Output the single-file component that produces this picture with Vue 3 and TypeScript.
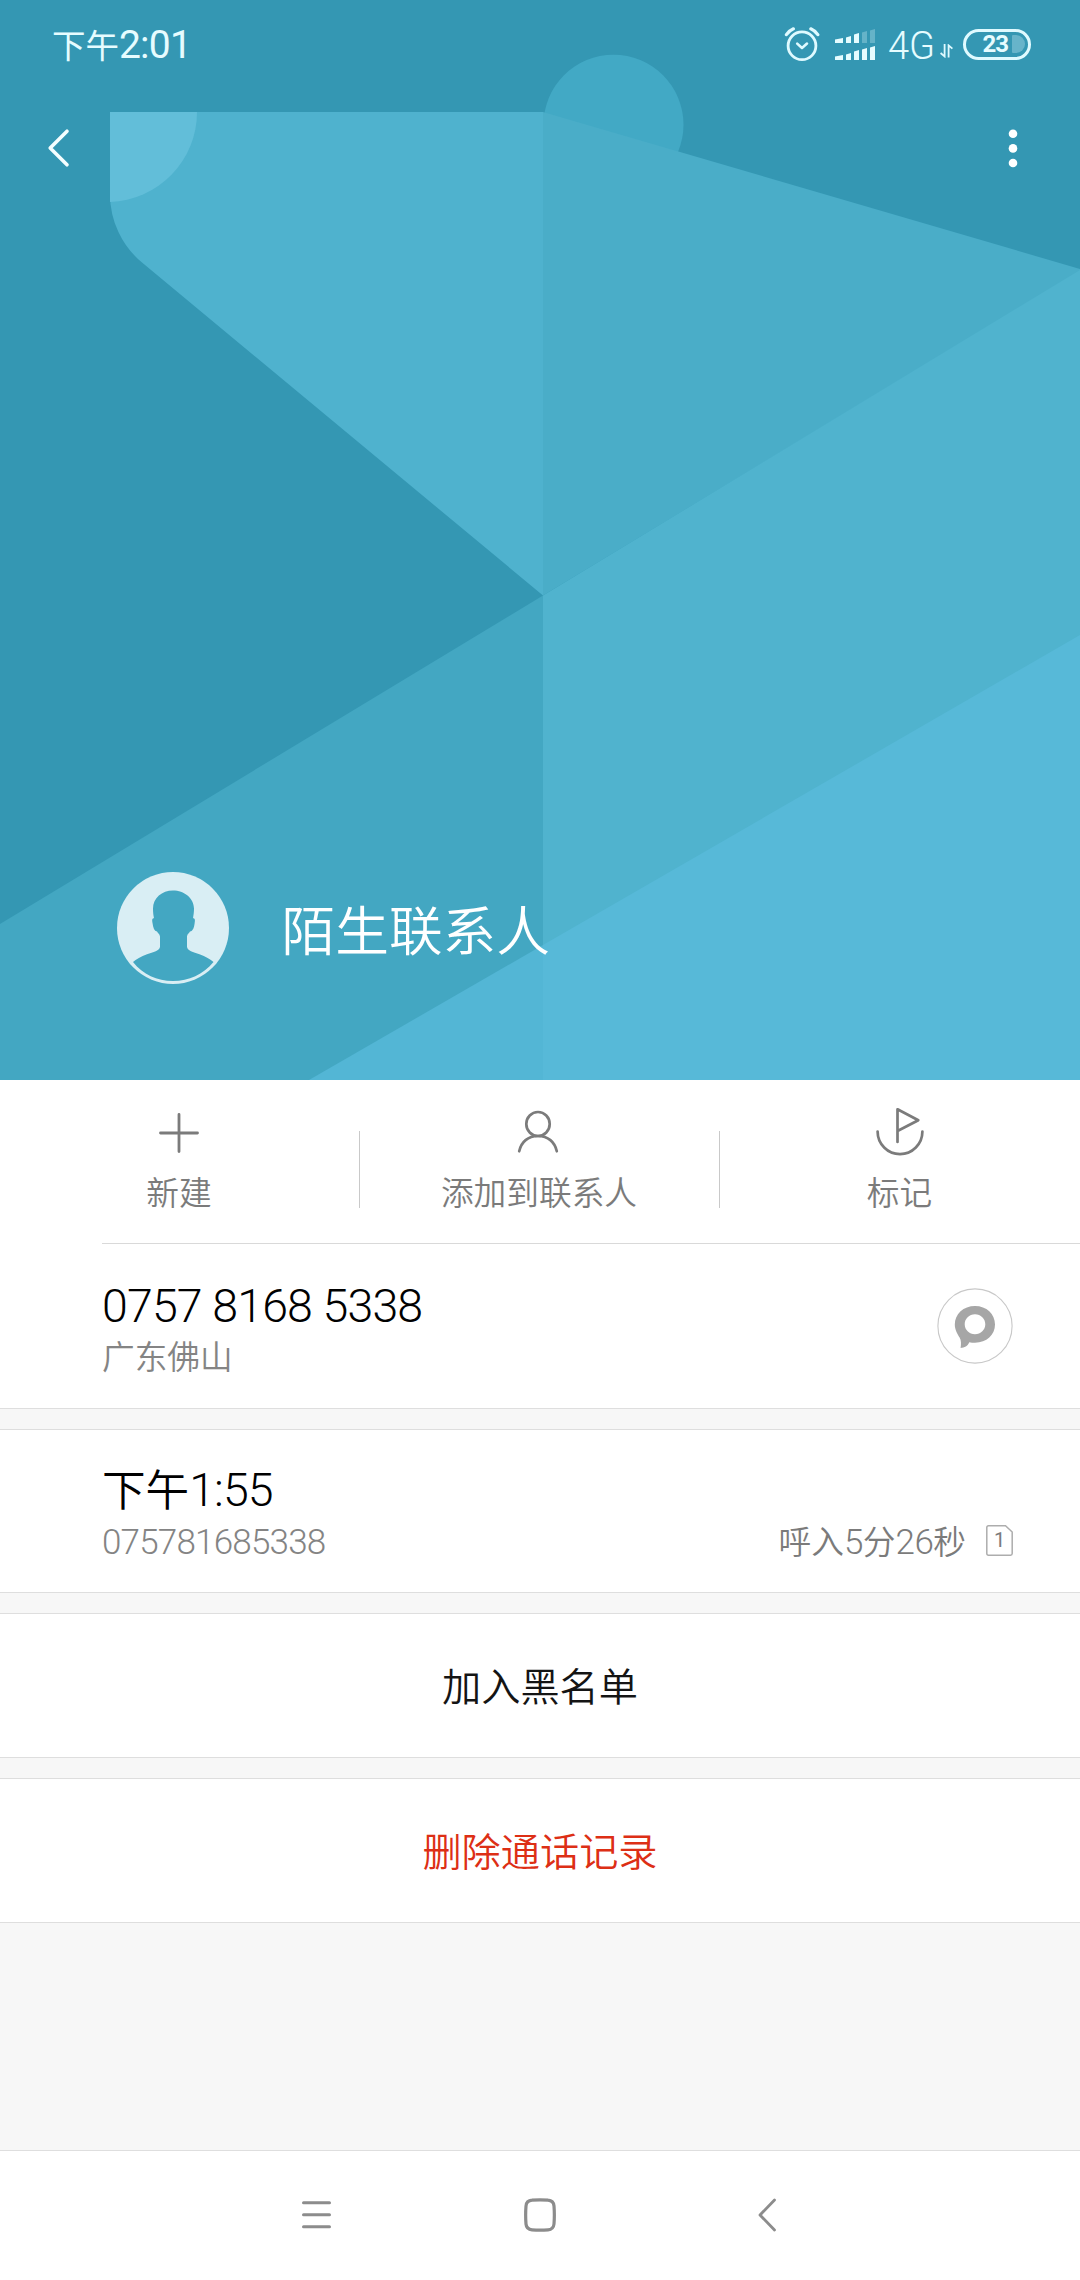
<script setup lang="ts">
interface Bar { x: number; h: number; dim: boolean }

const upperBars: Bar[] = [0, 1, 2, 3, 4].map((i) => ({ x: i, h: [5, 7, 10, 12, 14][i], dim: i > 2 }))
const lowerBars: Bar[] = [0, 1, 2, 3, 4].map((i) => ({ x: i, h: [5, 7, 10, 12, 14][i], dim: false }))
const barX: number[] = [0, 11, 19, 27, 35]
const barW: number[] = [8, 5, 5, 5, 5]

function barPath(b: Bar, bottom: number): string {
  const x = barX[b.x]
  const w = barW[b.x]
  const top = bottom - b.h
  return `M${x} ${top + 1.6}L${x + w} ${top}V${bottom}H${x}Z`
}
</script>

<template>
  <div class="screen">
    <header class="hero">
      <svg class="art" viewBox="0 0 1080 1080" width="1080" height="1080">
        <rect width="1080" height="1080" fill="#3497b3" />
        <circle cx="613.5" cy="124.7" r="70" fill="#42a9c5" />
        <path d="M0 924L543 595.5V1080H0Z" fill="#43a7c2" />
        <path d="M110 112H543V595.5L142.3 262.8A89 89 0 0 1 110 194Z" fill="#4fb2ce" />
        <path d="M110 112H197A90 90 0 0 1 110 202Z" fill="#62bed9" />
        <path d="M543 112L1080 269V271L543 595.5Z" fill="#4aadc8" />
        <path d="M543 595.5L1080 270V1080H543Z" fill="#50b3ce" />
        <path d="M309 1080L543 945V1080Z" fill="#53b6d5" />
        <path d="M543 945L1080 635V1080H543Z" fill="#57b9d8" />
      </svg>

      <div class="status">
        <div class="clock">下午<span class="num">2:01</span></div>
        <div class="indicators">
          <svg class="alarm" width="36" height="36" viewBox="0 0 36 36" fill="none" stroke="#dffaff" stroke-linecap="round">
            <circle cx="18" cy="19.8" r="13.9" stroke-width="2.8" />
            <path d="M13.2 17.6L18 22L23 17.6" stroke-width="2.6" stroke-linejoin="round" />
            <path d="M2.4 8.6Q5.2 4.6 9.4 2.8M26.8 2.8Q31 4.6 33.8 8.6" stroke-width="3.2" />
          </svg>
          <svg class="signal" width="41" height="32" viewBox="0 0 41 32">
            <path v-for="b in upperBars" :key="'u' + b.x" :d="barPath(b, 14)" fill="#e6fcff" :opacity="b.dim ? 0.28 : 1" />
            <path v-for="b in lowerBars" :key="'l' + b.x" :d="barPath(b, 31)" fill="#e6fcff" />
          </svg>
          <span class="net">4G</span>
          <svg class="arrows" width="13" height="14" viewBox="0 0 13 14" fill="none" stroke="#dffaff" stroke-width="1.8">
            <path d="M4.6 0V12.4L0.6 9M8.6 13.5V1.4L12.4 4.6" />
          </svg>
          <div class="battery"><span>23</span><i></i></div>
        </div>
      </div>

      <div class="toolbar">
        <svg width="24" height="40" viewBox="0 0 24 40" fill="none" stroke="#f4feff" stroke-width="3.6" stroke-linecap="round" stroke-linejoin="round">
          <path d="M21 3.2L4.2 20L21 36.8" />
        </svg>
        <svg width="10" height="40" viewBox="0 0 10 40" fill="#fff">
          <circle cx="5" cy="5.7" r="4.3" /><circle cx="5" cy="20.4" r="4.3" /><circle cx="5" cy="35" r="4.3" />
        </svg>
      </div>

      <div class="person">
        <svg width="112" height="112" viewBox="0 0 112 112">
          <circle cx="56" cy="56" r="56" fill="#d9eef4" />
          <path
            fill="#43a7c2"
            d="M56 18.5C45 18.5 36 26 36 36.5C36 40 36.3 43 37 46.3C34.5 46.2 35.2 49 35.6 51.5C36.2 56 37.2 58.8 40 59.6C41 61.5 42.6 62 43 64.5V74.5C43 79 36 80 30 82.3C24 84.6 19 87.5 16 90C26 102.5 40 109 56 109C72 109 86 102.5 96.5 90C93.5 87.5 88.5 84.6 82.5 82.3C76.5 80 70 79 70 74.5V64.5C70.3 62 72 61.5 73 59.6C76 58.8 77 56 77.6 51.5C78 49 78.5 46.2 76 46.3C76.6 43 77 40 77 36.5C77 26 67 18.5 56 18.5Z"
          />
        </svg>
        <h1>陌生联系人</h1>
      </div>
    </header>

    <nav class="actions">
      <div class="action">
        <svg width="50" height="50" viewBox="0 0 50 50" fill="none" stroke="#7b7b7b" stroke-width="2.8" stroke-linecap="round">
          <path d="M25 6.5V43.5M6.5 25H43.5" />
        </svg>
        <span>新建</span>
      </div>
      <div class="action">
        <svg width="50" height="50" viewBox="0 0 50 50" fill="none" stroke="#7b7b7b" stroke-width="2.7" stroke-linecap="round">
          <ellipse cx="24" cy="17" rx="11.7" ry="12" />
          <path d="M5.2 44.3C7.2 35 14 29 24 29S40.8 35 42.8 44.3" />
        </svg>
        <span>添加到联系人</span>
      </div>
      <div class="action">
        <svg width="50" height="50" viewBox="0 0 50 50" fill="none" stroke="#7b7b7b" stroke-width="2.7" stroke-linecap="round" stroke-linejoin="round">
          <path d="M22.5 35V2.3L43.3 13.2L22.5 24M2.6 24.5A22.4 22.6 0 0 0 47.4 24.5" />
        </svg>
        <span>标记</span>
      </div>
    </nav>

    <section class="row phone">
      <div class="lines">
        <div class="big num">0757 8168 5338</div>
        <div class="sub">广东佛山</div>
      </div>
      <svg class="msg" width="76" height="76" viewBox="0 0 76 76">
        <circle cx="38" cy="38" r="37.1" fill="#fff" stroke="#c8c8c8" stroke-width="1.1" />
        <path
          fill="#a6a6a6"
          fill-rule="evenodd"
          d="M38 18C26.5 18 17.8 26 17.8 36.5C17.8 42 20.5 46 22.6 49.5C24.3 52.5 24.2 56 23.6 60C27.5 59.6 30.8 58 32.3 54.2C34 54.6 36 54.7 38 54.7C49.5 54.7 58 47 58 36.5C58 26 49.5 18 38 18ZM38 26.3C43.8 26.3 48.3 30.8 48.3 36.3S43.800 46.3 38 46.3S27.7 41.800 27.7 36.3S32.2 26.3 38 26.3Z"
        />
      </svg>
    </section>

    <section class="row call">
      <div class="lines">
        <div class="when">下午<span class="num">1:55</span></div>
        <div class="sub num">075781685338</div>
      </div>
      <div class="detail">
        <span>呼入<b>5</b>分<b>26</b>秒</span>
        <span class="sim">
          <svg width="27" height="31" viewBox="0 0 27 31" fill="none" stroke="#adadad" stroke-width="1.5">
            <path d="M2.5 .8H19.5L26.2 7V28.5Q26.2 30.2 24.5 30.2H2.5Q.8 30.2 .8 28.5V2.5Q.8 .8 2.5 .8Z" />
          </svg>
          <em>1</em>
        </span>
      </div>
    </section>

    <section class="row center">加入黑名单</section>
    <section class="row center danger">删除通话记录</section>

    <div class="filler"></div>

    <footer class="sysnav">
      <svg width="32" height="32" viewBox="0 0 32 32" stroke="#8c8c8c" stroke-width="3" stroke-linecap="round">
        <path d="M2.5 3.7H28.5M2.5 15.8H28.5M2.5 27.8H28.5" />
      </svg>
      <svg width="32" height="34" viewBox="0 0 32 34" fill="none" stroke="#8c8c8c" stroke-width="3.2">
        <path d="M8 2.2Q16 1.4 24 2.2Q29.5 2.6 30 8Q30.7 17 30 26Q29.5 31.4 24 31.8Q16 32.6 8 31.8Q2.5 31.4 2 26Q1.3 17 2 8Q2.5 2.6 8 2.2Z" />
      </svg>
      <svg width="20" height="34" viewBox="0 0 20 34" fill="none" stroke="#8c8c8c" stroke-width="2.8" stroke-linecap="round" stroke-linejoin="round">
        <path d="M17.5 2L3 17L17.5 32" />
      </svg>
    </footer>
  </div>
</template>

<style>
body {
  margin: 0;
}
</style>

<style scoped>
.screen {
  width: 1080px;
  height: 2280px;
  display: flex;
  flex-direction: column;
  background: #f7f7f7;
  font-family: "Noto Sans CJK SC", sans-serif;
  font-weight: 350;
  white-space: nowrap;
  overflow: hidden;
}
svg {
  display: block;
  flex: none;
}
.num,
b {
  font-family: Roboto, "Noto Sans CJK SC", sans-serif;
  font-weight: 340;
}
.hero {
  position: relative;
  height: 1080px;
  flex: none;
  display: flex;
  flex-direction: column;
}
.art {
  position: absolute;
  inset: 0;
}
.status,
.toolbar,
.person {
  position: relative;
  display: flex;
}
.status {
  height: 90px;
  justify-content: space-between;
  color: #e6fcff;
}
.clock {
  padding-left: 52px;
  font-size: 33.5px;
  line-height: 88px;
  font-weight: 400;
}
.clock .num {
  font-size: 39px;
  font-weight: 400;
  letter-spacing: -0.8px;
}
.indicators {
  display: flex;
  align-items: flex-start;
  padding: 26px 49px 0 0;
}
.signal {
  margin: 3px 0 0 15px;
}
.net {
  width: 50px;
  margin: 0 0 0 12px;
  font: 340 38px/40px Roboto, sans-serif;
}
.arrows {
  margin: 18px 0 0 2px;
}
.battery {
  box-sizing: border-box;
  width: 68px;
  height: 31px;
  margin: 2.5px 0 0 10px;
  border: 3px solid #dffaff;
  border-radius: 16px;
  display: flex;
  align-items: center;
  justify-content: flex-end;
  gap: 4px;
  padding-right: 3px;
}
.battery span {
  font: 700 24px/25px Roboto, sans-serif;
  letter-spacing: -1px;
}
.battery i {
  width: 13px;
  height: 18px;
  border-radius: 1px 9px 9px 1px;
  background: rgba(223, 250, 255, 0.3);
}
.toolbar {
  justify-content: space-between;
  padding: 38px 62px 0 46px;
}
.person {
  align-items: center;
  margin: 704px 0 0 117px;
}
h1 {
  margin: 0 0 0 52.5px;
  font-size: 53.7px;
  line-height: 80px;
  font-weight: 350;
  color: #fff;
}
.actions {
  height: 163px;
  margin-left: 102px;
  flex: none;
  display: flex;
  background: #fff;
  border-bottom: 1px solid #d9d9d9;
  box-shadow: -102px 0 0 #fff;
}
.action {
  position: relative;
  width: 360px;
  display: flex;
  flex-direction: column;
  align-items: center;
  padding-top: 28px;
  font-size: 32.7px;
  line-height: 40px;
  color: #7b7b7b;
}
.action:first-child {
  width: 257px;
}
.action:first-child > * {
  margin-left: -103px;
}
.action:last-child {
  width: 361px;
}
.action + .action::before {
  content: "";
  position: absolute;
  left: 0;
  top: 51px;
  width: 1px;
  height: 77px;
  background: #c9c9c9;
}
.action span {
  margin-top: 13px;
}
.action + .action svg {
  margin-top: -1px;
  margin-bottom: 1px;
}
.row {
  box-sizing: border-box;
  flex: none;
  background: #fff;
  border-bottom: 1px solid #dedede;
}
.row + .row {
  margin-top: 20px;
  border-top: 1px solid #dedede;
}
.phone,
.call {
  display: flex;
  justify-content: space-between;
  padding: 0 67px 0 102px;
}
.phone {
  height: 165px;
  align-items: center;
}
.phone .lines {
  padding-top: 3px;
}
.call {
  height: 164px;
}
.big {
  font-size: 46.5px;
  line-height: 54px;
  letter-spacing: -0.85px;
  color: #000;
}
.sub {
  font-size: 32.7px;
  line-height: 44px;
  color: #848484;
}
.sub.num {
  font-size: 35px;
  letter-spacing: -0.8px;
}
.when {
  margin-top: 29px;
  margin-bottom: 3px;
  font-size: 43.6px;
  line-height: 56px;
  color: #000;
}
.when .num {
  font-size: 46.5px;
  letter-spacing: -0.9px;
}
.detail {
  display: flex;
  align-items: flex-start;
  padding-top: 88px;
  gap: 20px;
  font-size: 32.7px;
  line-height: 44px;
  color: #7b7b7b;
}
.detail b {
  font-size: 35px;
  letter-spacing: -0.5px;
}
.sim {
  position: relative;
  margin-top: 7px;
}
.sim em {
  position: absolute;
  inset: 0;
  text-align: center;
  font: 400 20px/31px Roboto, sans-serif;
}
.center {
  height: 145px;
  display: flex;
  align-items: center;
  justify-content: center;
  padding-bottom: 4px;
  font-size: 39.2px;
  color: #141414;
}
.danger {
  color: #dd2f15;
}
.filler {
  flex: 1;
}
.sysnav {
  box-sizing: border-box;
  height: 130px;
  flex: none;
  display: flex;
  align-items: center;
  justify-content: space-between;
  padding: 0 303px 2px 301px;
  background: #fff;
  border-top: 1px solid #dedede;
}
.sysnav svg:nth-child(2) {
  margin-left: -11px;
}
</style>
